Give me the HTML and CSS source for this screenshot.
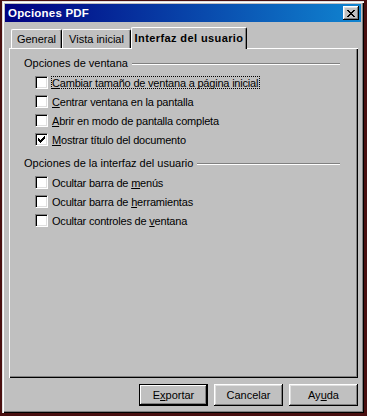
FILE: index.html
```html
<!DOCTYPE html>
<html lang="es">
<head>
    <meta charset="UTF-8">
    <meta name="viewport" content="width=device-width, initial-scale=1.0">
    <title>Opciones PDF</title>
    <link rel="stylesheet" href="styles.css">
</head>
<body>

<div class="window">
    <div class="titlebar">
        <span class="title">Opciones PDF</span>
        <span class="close">
            <svg width="8" height="7" viewBox="0 0 8 7">
                <path d="M0 0h2v1h-2z M6 0h2v1h-2z M1 1h2v1h-2z M5 1h2v1h-2z M2 2h4v1h-4z M3 3h2v1h-2z M2 4h4v1h-4z M1 5h2v1h-2z M5 5h2v1h-2z M0 6h2v1h-2z M6 6h2v1h-2z" fill="#000"/>
            </svg>
        </span>
    </div>

    <div class="client">
        <div class="tabs">
            <div class="tab tab-general">General</div>
            <div class="tab tab-vista">Vista inicial</div>
            <div class="tab tab-active">Interfaz del usuario</div>
        </div>

        <div class="panel">
            <div class="group">
                <div class="group-title"><span>Opciones de ventana</span><span class="rule"></span></div>
                <div class="option"><span class="box"></span><span class="label focus"><u>C</u>ambiar tamaño de ventana a página inicial</span></div>
                <div class="option"><span class="box"></span><span class="label"><u>C</u>entrar ventana en la pantalla</span></div>
                <div class="option"><span class="box"></span><span class="label"><u>A</u>brir en modo de pantalla completa</span></div>
                <div class="option">
                    <span class="box">
                        <svg width="11" height="11" viewBox="0 0 11 11">
                            <path d="M2 4h1v3h-1z M3 5h1v3h-1z M4 6h1v3h-1z M5 5h1v3h-1z M6 4h1v3h-1z M7 3h1v3h-1z M8 2h1v3h-1z" fill="#000"/>
                        </svg>
                    </span>
                    <span class="label"><u>M</u>ostrar título del documento</span>
                </div>
            </div>

            <div class="group group-second">
                <div class="group-title"><span>Opciones de la interfaz del usuario</span><span class="rule"></span></div>
                <div class="option"><span class="box"></span><span class="label">Ocultar barra de <u>m</u>enús</span></div>
                <div class="option"><span class="box"></span><span class="label">Ocultar barra de <u>h</u>erramientas</span></div>
                <div class="option"><span class="box"></span><span class="label">Ocultar controles de <u>v</u>entana</span></div>
            </div>
        </div>

        <div class="buttons">
            <button class="btn btn-default">E<u>x</u>portar</button>
            <button class="btn">Cancelar</button>
            <button class="btn">Ay<u>u</u>da</button>
        </div>
    </div>
</div>

</body>
</html>
```

FILE: styles.css
```css
body {
    margin: 0;
    background-color: #4a1010;
    font-family: "Liberation Sans", Arial, sans-serif;
    font-size: 11px;
    color: #000;
}

.window {
    box-sizing: border-box;
    width: 362px;
    height: 412px;
    margin: 1px 0 0 2px;
    padding: 3px;
    background-color: #c0c0c0;
    box-shadow: inset 1px 1px #dfdfdf, inset 2px 2px #fff, inset -1px -1px #000, inset -2px -2px #808080;
}

.titlebar {
    height: 18px;
    display: flex;
    align-items: center;
    justify-content: space-between;
    padding: 0 2px 0 3px;
    background: linear-gradient(to right, #000080, #1084d0);
}

.title {
    color: #fff;
    font-weight: bold;
    font-size: 11.5px;
    letter-spacing: 0.2px;
}

.close {
    box-sizing: border-box;
    width: 16px;
    height: 14px;
    display: flex;
    align-items: center;
    justify-content: center;
    background-color: #c0c0c0;
    box-shadow: inset -1px -1px #000, inset 1px 1px #fff, inset -2px -2px #808080, inset 2px 2px #dfdfdf;
}

.client {
    padding: 5px 3px 0 4px;
}

/* tab strip */
.tabs {
    height: 21px;
    display: flex;
    align-items: flex-end;
    padding-left: 2px;
}

.tab {
    box-sizing: border-box;
    height: 19px;
    padding-top: 3px;
    text-align: center;
    border-top: 1px solid #fff;
    border-left: 1px solid #fff;
    border-right: 1px solid #000;
    border-radius: 2px 2px 0 0;
    box-shadow: inset -1px 0 #808080;
}

.tab-general {
    width: 51px;
}

.tab-vista {
    width: 69px;
}

.tab-active {
    position: relative;
    z-index: 1;
    width: 116px;
    height: 22px;
    margin-bottom: -1px;
    padding-top: 4px;
    font-weight: bold;
    letter-spacing: 0.4px;
    background-color: #c0c0c0;
}

/* page */
.panel {
    box-sizing: border-box;
    height: 330px;
    padding: 9px 18px 0 15px;
    box-shadow: inset 1px 1px #fff, inset -1px -1px #000, inset -2px -2px #808080;
}

.group-title {
    height: 13px;
    line-height: 13px;
    display: flex;
    align-items: center;
    margin-bottom: 3px;
}

.rule {
    flex: 1;
    height: 0;
    margin-left: 4px;
    border-top: 1px solid #808080;
    border-bottom: 1px solid #fff;
}

.group-second {
    margin-top: 8px;
}

.option {
    height: 19px;
    display: flex;
    align-items: center;
    padding-left: 11px;
}

.box {
    box-sizing: border-box;
    width: 13px;
    height: 13px;
    margin-right: 3px;
    background-color: #fff;
    border: 1px solid;
    border-color: #808080 #fff #fff #808080;
    box-shadow: inset 1px 1px #000, inset -1px -1px #dfdfdf;
}

.box svg {
    display: block;
}

.label {
    height: 11px;
    line-height: 12px;
    padding-right: 1px;
    letter-spacing: -0.2px;
    border: 1px dotted transparent;
}

.label.focus {
    border-color: #000;
}

/* bottom buttons */
.buttons {
    display: flex;
    justify-content: flex-end;
    gap: 6px;
    margin-top: 6px;
}

.btn {
    width: 69px;
    height: 22px;
    padding: 0;
    border: none;
    background-color: #c0c0c0;
    font-family: "Liberation Sans", Arial, sans-serif;
    font-size: 11px;
    color: #000;
    box-shadow: inset -1px -1px #000, inset 1px 1px #fff, inset -2px -2px #808080, inset 2px 2px #dfdfdf;
}

.btn-default {
    box-shadow: inset 0 0 0 1px #000, inset -2px -2px #000, inset 2px 2px #fff, inset -3px -3px #808080;
}
```
